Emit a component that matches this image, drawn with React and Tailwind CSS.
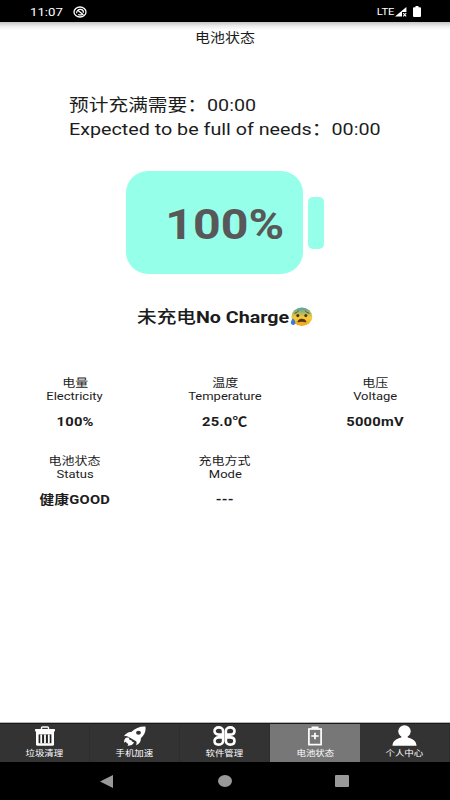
import clsx from 'clsx';

const STATS = [
    { zh: '电量', en: 'Electricity', value: '100%' },
    { zh: '温度', en: 'Temperature', value: '25.0℃' },
    { zh: '电压', en: 'Voltage', value: '5000mV' },
    { zh: '电池状态', en: 'Status', value: '健康GOOD' },
    { zh: '充电方式', en: 'Mode', value: '---' },
];

const TABS = [
    { label: '垃圾清理', Icon: TrashIcon },
    { label: '手机加速', Icon: RocketIcon },
    { label: '软件管理', Icon: CloverIcon },
    { label: '电池状态', Icon: BatteryIcon, active: true },
    { label: '个人中心', Icon: UserIcon },
];

// Wide text, same proportions everywhere
function Wide({ className, children }) {
    return <span className={clsx('inline-block scale-x-115 whitespace-nowrap', className)}>{children}</span>;
}

function TrashIcon() {
    return (
        <svg width="20" height="20" viewBox="0 0 20 20" fill="none">
            <path d="M6.5 3.5V1.8Q6.5 1 7.5 1H12.5Q13.5 1 13.5 1.8V3.5" stroke="#fff" strokeWidth="1.4" />
            <rect x="0" y="3" width="20" height="2.4" rx=".6" fill="#fff" />
            <path d="M1 5H19V18.2Q19 19.7 17.3 19.7H2.7Q1 19.7 1 18.2Z" fill="#fff" />
            <rect x="3.6" y="8.4" width="12.8" height="8.8" fill="#222" />
            <path d="M6.2 8.4V17.2M10 8.4V17.2M13.8 8.4V17.2" stroke="#fff" strokeWidth="1.8" />
        </svg>
    );
}

function RocketIcon() {
    return (
        <svg width="23" height="20" viewBox="0 0 23 20" fill="#fff">
            <path d="M22.4.4C17 .2 11.8 2 8.3 6C5.3 5.7 2.8 7.3.9 10.3C2.7 9.8 4.1 10 5.2 10.7L13.1 15.2C13.8 16.3 13.7 17.8 13 19.2C16.5 17.7 18.2 15.3 17.8 12.3C21.7 9 23.1 4.8 22.4.4Z" />
            <path d="M4.1 11.4C1.7 11.6 1 14 1 16.8C2 15.8 2.7 15.6 3.4 15.8C3 16.8 3.8 17.8 5 17.4C5.4 18.6 5 19.2 4.1 19.8C7.8 19.6 10.6 18.6 10.8 15.9C9.3 16.2 8.5 15.4 8.6 14.3C6.8 14.7 5.5 13.2 6.2 11.8Z" />
            <ellipse cx="15.5" cy="6.8" rx="2.4" ry="2" fill="#333" />
        </svg>
    );
}

function CloverIcon() {
    return (
        <svg width="23" height="20" viewBox="0 0 23 20" fill="none" stroke="#fff" strokeWidth="2.6">
            <path d="M10.1 8.6H5.7C3.1 8.6 1.5 7.1 1.5 5S3.1 1.4 5.7 1.4S10.1 3 10.1 5Z" />
            <path d="M12.9 8.6H17.3C19.9 8.6 21.5 7.1 21.5 5S19.9 1.4 17.3 1.4S12.9 3 12.9 5Z" />
            <path d="M10.1 11.4H5.7C3.1 11.4 1.5 12.9 1.5 15S3.1 18.6 5.7 18.6S10.1 17 10.1 15Z" />
            <path d="M12.9 11.4H17.3C19.9 11.4 21.5 12.9 21.5 15S19.9 18.6 17.3 18.6S12.9 17 12.9 15Z" />
        </svg>
    );
}

function BatteryIcon() {
    return (
        <svg width="14" height="20" viewBox="0 0 14 20" fill="none" stroke="#fff">
            <path d="M3.5 1.6H10.5" strokeWidth="2.2" />
            <rect x=".9" y="3" width="12.2" height="15.6" strokeWidth="1.7" />
            <path d="M3.3 10H10.7M7 6.8V13.2" strokeWidth="1.7" />
        </svg>
    );
}

function UserIcon() {
    return (
        <svg width="25" height="21" viewBox="0 0 25 21" fill="#fff">
            <ellipse cx="12.5" cy="6.2" rx="6.2" ry="6" />
            <path d="M9.3 10H15.7V12.4C21 13.7 24.5 16 24.5 20.8H.5C.5 16 4 13.7 9.3 12.4Z" />
        </svg>
    );
}

function WorriedFace() {
    return (
        <svg width="23" height="20" viewBox="0 0 23 20" role="img" aria-label="😰">
            <defs>
                <linearGradient id="face" x1="0" y1="0" x2="0" y2="1">
                    <stop offset="0" stopColor="#4ba3ad" />
                    <stop offset=".28" stopColor="#a9b765" />
                    <stop offset=".55" stopColor="#f7cb35" />
                    <stop offset="1" stopColor="#f2a51d" />
                </linearGradient>
            </defs>
            <ellipse cx="11.8" cy="9.8" rx="10.5" ry="9.2" fill="url(#face)" />
            <path d="M4.8 6.3Q7.2 5.8 8.5 3.9M15.2 3.9Q16.5 5.8 18.9 6.3" fill="none" stroke="#66501d" strokeWidth="1" strokeLinecap="round" />
            <ellipse cx="7.8" cy="8.6" rx="1.5" ry="1.6" fill="#4b3419" />
            <ellipse cx="15.8" cy="8.6" rx="1.5" ry="1.6" fill="#4b3419" />
            <path d="M7.7 15Q8.3 12 11.9 12T16.1 15Q12 13.9 7.7 15Z" fill="#56351b" stroke="#56351b" strokeWidth=".7" />
            <path d="M3 11.3Q.4 14.6 .9 16.2Q1.4 18 3.2 18T5.4 16Q5.6 14.3 3 11.3Z" fill="#3c79dc" />
        </svg>
    );
}

function StatusBar() {
    return (
        <div className="flex h-[22px] shrink-0 items-center justify-between bg-black pl-[30px] pr-[29px] pt-px text-white">
            <div className="flex items-center gap-[14px]">
                <Wide className="origin-left text-[11.5px] leading-[22px]">11:07</Wide>
                <svg width="14" height="12" viewBox="0 0 14 12" fill="none" stroke="#fff" strokeWidth="1.3">
                    <ellipse cx="7" cy="6" rx="6" ry="5" />
                    <path d="M3.6 7.2C3.6 4.4 5.4 3 8 3.4C9.8 3.8 10.6 5 10.4 6.8M4.6 4.2L10.4 8.8M5.2 8.4Q7 9.4 9.2 8.6" strokeWidth="1.2" />
                </svg>
            </div>
            <div className="flex items-center">
                <Wide className="mr-[2px] text-[9.8px] leading-[22px]">LTE</Wide>
                <svg width="12" height="10" viewBox="0 0 12 10">
                    <path d="M0 9.6L11.4 0V5H7V9.6Z" fill="#fff" />
                    <path d="M8.2 6.2L11.2 9.4M11.2 6.2L8.2 9.4" stroke="#fff" strokeWidth="1.1" />
                </svg>
                <svg className="ml-[6px]" width="8" height="11" viewBox="0 0 8 11" fill="#fff">
                    <path d="M2.5 0H5.5V1.2H7Q8 1.2 8 2.2V10Q8 11 7 11H1Q0 11 0 10V2.2Q0 1.2 1 1.2H2.5Z" />
                </svg>
            </div>
        </div>
    );
}

export default function App() {
    return (
        <div className="flex h-[800px] w-[450px] flex-col overflow-hidden bg-white font-[Roboto,'Noto_Sans_CJK_SC',sans-serif] text-[#1c1c1c]">
            <StatusBar />
            <div className="h-[8px] shrink-0 bg-linear-to-b from-[#c4c4c4] via-[#ececec] to-white" />

            <main className="flex min-h-0 flex-1 flex-col">
                <h1 className="text-center text-[13px] leading-[15px]">
                    <Wide>电池状态</Wide>
                </h1>

                <div className="mt-[48px] pl-[69px] text-[17.15px] leading-6">
                    <div><Wide className="origin-left">预计充满需要：00:00</Wide></div>
                    <div><Wide className="origin-left">Expected to be full of needs：00:00</Wide></div>
                </div>

                {/* Battery */}
                <div className="mt-[30px] flex items-center gap-[5px] pl-[126px]">
                    <div className="flex h-[103px] w-[177px] items-center justify-center rounded-[22px] bg-[#96ffe9] pl-[21px] pt-[5px]">
                        <Wide className="text-[42px] font-bold leading-none text-[#585858]">100%</Wide>
                    </div>
                    <div className="h-[52px] w-[16px] rounded-[5px] bg-[#96ffe9]" />
                </div>

                <div className="mt-[31px] flex h-6 items-center pl-[137px] text-[17.1px] font-bold leading-6">
                    <Wide className="w-[133px] origin-left">
                        <span className="font-medium">未充电</span>No Charge
                    </Wide>
                    <span className="ml-[20px]"><WorriedFace /></span>
                </div>

                <div className="mt-[48px] grid grid-cols-3 text-center">
                    {STATS.map((s) => (
                        <div key={s.en} className="flex h-[78px] flex-col items-center">
                            <Wide className="text-[11.3px] leading-[14px]">{s.zh}</Wide>
                            <Wide className="text-[11.3px] leading-[12px]">{s.en}</Wide>
                            <Wide className="mt-[10px] text-[12.8px] font-bold leading-[18px] tracking-[0.015em]">{s.value}</Wide>
                        </div>
                    ))}
                </div>
            </main>

            <nav className="grid h-10 shrink-0 grid-cols-5 border-t border-[#b5b5b5] bg-[#333] text-white">
                {TABS.map(({ label, Icon, active }) => (
                    <button
                        key={label}
                        className={clsx(
                            'flex flex-col items-center border-t border-t-[#181818]',
                            active ? 'bg-[#777]' : 'border-r border-r-[#2e2e2e]'
                        )}
                    >
                        <span className="flex h-[23px] items-center justify-center"><Icon /></span>
                        <Wide className="text-[8.2px] leading-[12px]">{label}</Wide>
                    </button>
                ))}
            </nav>

            {/* Android buttons */}
            <div className="flex h-[38px] shrink-0 items-center bg-black pl-[100px]">
                <svg width="13" height="13" viewBox="0 0 13 13" fill="#999"><path d="M0 6.5L13 0V13Z" /></svg>
                <div className="ml-[105px] h-3 w-[14px] rounded-[50%] bg-[#999]" />
                <div className="ml-[103px] h-3 w-[14px] rounded-[1px] bg-[#999]" />
            </div>
        </div>
    );
}
